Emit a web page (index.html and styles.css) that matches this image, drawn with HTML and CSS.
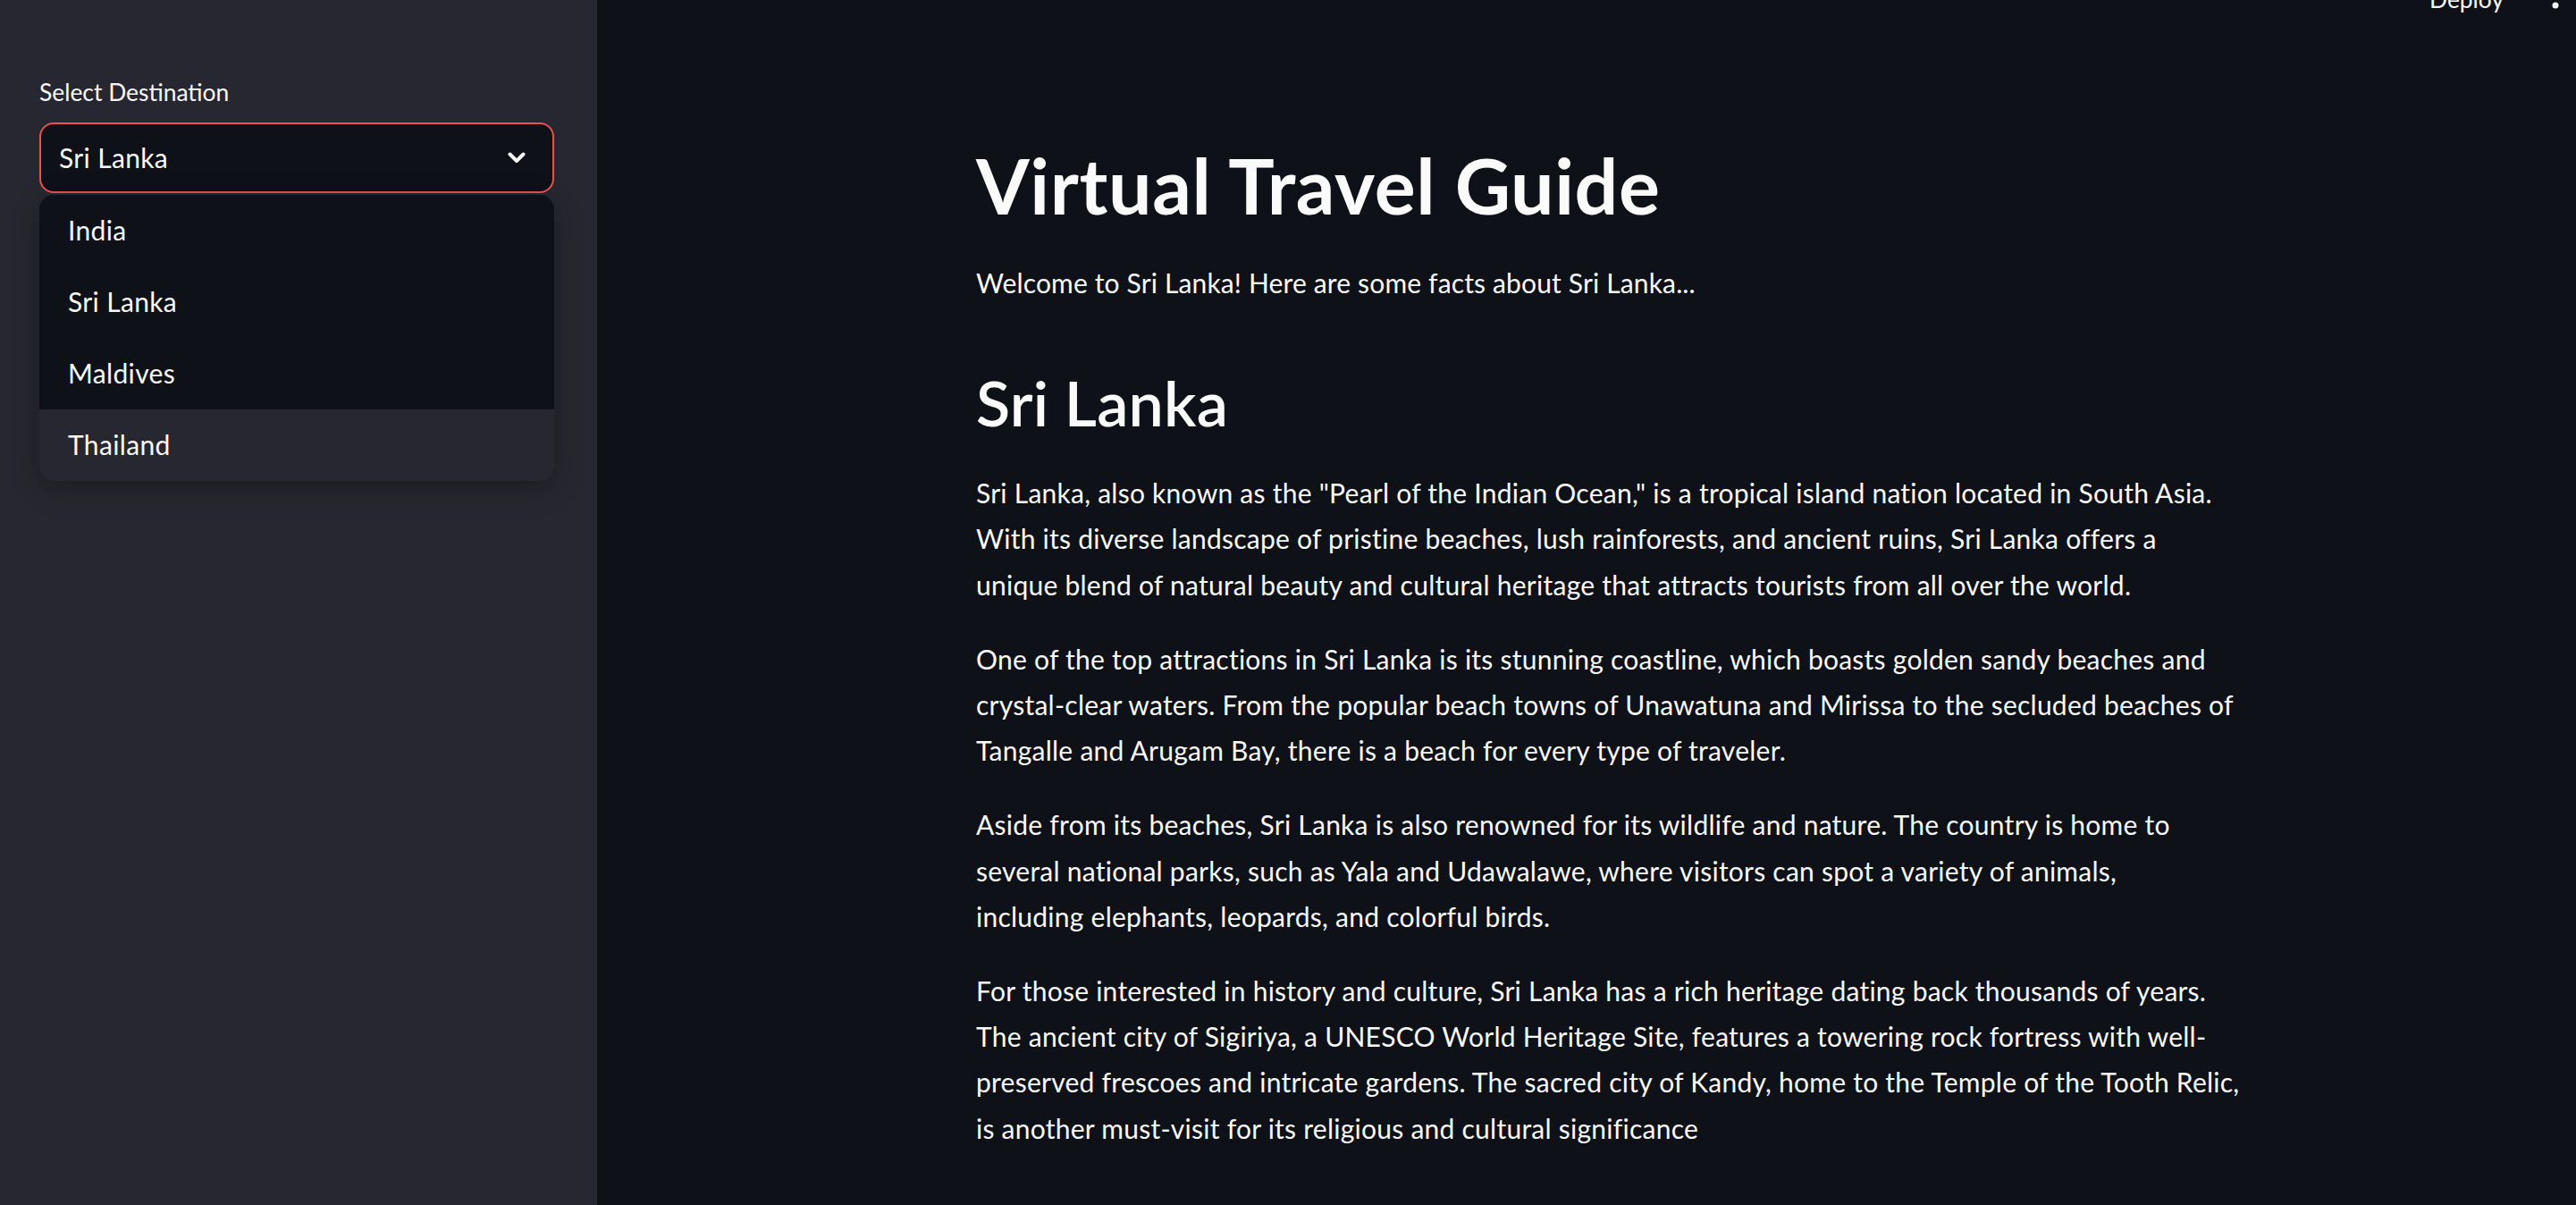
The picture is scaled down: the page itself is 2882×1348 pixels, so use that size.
FILE: index.html
```html
<!DOCTYPE html>
<html lang="en">
<head>
<meta charset="utf-8">
<title>Virtual Travel Guide</title>
<link rel="stylesheet" href="styles.css">
</head>
<body>
<div class="app">
  <aside class="sidebar">
    <div class="sidebar-content">
      <label class="widget-label">Select Destination</label>
      <div class="select">
        <div class="select-box">
          <span class="select-value">Sri Lanka</span>
          <svg class="chevron" width="20" height="13" viewBox="0 0 20 13" aria-hidden="true">
            <polyline points="2.5,2.5 10,10 17.5,2.5" fill="none" stroke="#fafafa" stroke-width="4" stroke-linecap="round" stroke-linejoin="round"/>
          </svg>
        </div>
        <ul class="menu">
          <li class="menu-item">India</li>
          <li class="menu-item">Sri Lanka</li>
          <li class="menu-item">Maldives</li>
          <li class="menu-item is-hover">Thailand</li>
        </ul>
      </div>
    </div>
  </aside>
  <main class="main">
    <header class="header">
      <span class="deploy">Deploy</span>
      <svg class="dots" width="8" height="34" viewBox="0 0 8 34" aria-hidden="true">
        <circle cx="4" cy="4" r="3.5" fill="#fafafa"/>
        <circle cx="4" cy="17" r="3.5" fill="#fafafa"/>
        <circle cx="4" cy="30" r="3.5" fill="#fafafa"/>
      </svg>
    </header>
    <div class="block">
      <h1 class="title">Virtual Travel Guide</h1>
      <p class="welcome">Welcome to Sri Lanka! Here are some facts about Sri Lanka...</p>
      <h2 class="subtitle">Sri Lanka</h2>
      <p class="para">Sri Lanka, also known as the "Pearl of the Indian Ocean," is a tropical island nation located in South Asia.<br>
      With its diverse landscape of pristine beaches, lush rainforests, and ancient ruins, Sri Lanka offers a<br>
      unique blend of natural beauty and cultural heritage that attracts tourists from all over the world.</p>
      <p class="para">One of the top attractions in Sri Lanka is its stunning coastline, which boasts golden sandy beaches and<br>
      crystal-clear waters. From the popular beach towns of Unawatuna and Mirissa to the secluded beaches of<br>
      Tangalle and Arugam Bay, there is a beach for every type of traveler.</p>
      <p class="para">Aside from its beaches, Sri Lanka is also renowned for its wildlife and nature. The country is home to<br>
      several national parks, such as Yala and Udawalawe, where visitors can spot a variety of animals,<br>
      including elephants, leopards, and colorful birds.</p>
      <p class="para">For those interested in history and culture, Sri Lanka has a rich heritage dating back thousands of years.<br>
      The ancient city of Sigiriya, a UNESCO World Heritage Site, features a towering rock fortress with well-<br>
      preserved frescoes and intricate gardens. The sacred city of Kandy, home to the Temple of the Tooth Relic,<br>
      is another must-visit for its religious and cultural significance</p>
    </div>
  </main>
</div>
</body>
</html>
```

FILE: styles.css
```css
* {
  box-sizing: border-box;
}

html, body {
  margin: 0;
  padding: 0;
}

body {
  background: #0e1117;
  color: #fafafa;
  font-family: Lato, "Noto Sans", sans-serif;
  height: 1348px;
  overflow: hidden;
}

.app {
  display: flex;
  height: 1348px;
}

/* Sidebar */
.sidebar {
  flex: none;
  width: 668px;
  background: #262730;
}

.sidebar-content {
  padding: 81px 48px 0 44px;
}

.widget-label {
  display: block;
  font-size: 26.4px;
  line-height: 45px;
  height: 45px;
  margin-bottom: 11px;
  color: #fafafa;
}

.select {
  position: relative;
  width: 576px;
}

.select-box {
  height: 79px;
  display: flex;
  align-items: center;
  justify-content: space-between;
  padding: 0 30px 2px 20px;
  border: 2px solid #ea524e;
  border-radius: 16px;
  background: #0e1117;
}

.select-value {
  font-size: 30px;
  line-height: 36px;
  letter-spacing: 0.35px;
}

.chevron {
  display: block;
  margin-top: 2px;
}

.menu {
  position: absolute;
  top: 81px;
  left: 0;
  right: 0;
  margin: 0;
  padding: 0;
  list-style: none;
  background: #0e1117;
  border-radius: 16px;
  overflow: hidden;
  box-shadow: 0 8px 32px rgba(0, 0, 0, 0.28);
}

.menu-item {
  height: 80px;
  display: flex;
  align-items: center;
  padding: 0 0 3px 32px;
  font-size: 30px;
  line-height: 36px;
  letter-spacing: 0.35px;
}

.menu-item.is-hover {
  background: #262730;
}

/* Main */
.main {
  flex: 1;
  position: relative;
}

.header {
  position: absolute;
  top: -24px;
  right: 19px;
  display: flex;
  align-items: flex-start;
  gap: 54px;
}

.deploy {
  font-size: 26.4px;
  line-height: 37px;
  margin-top: 5px;
}

.dots {
  display: block;
}

.block {
  padding: 155px 0 0 424px;
}

.title {
  width: 1440px;
  margin: 0;
  font-size: 86px;
  line-height: 103px;
  font-weight: 700;
  letter-spacing: 0.6px;
}

.welcome {
  width: 1440px;
  margin: 33px 0 0;
  font-size: 30px;
  line-height: 51.2px;
  letter-spacing: 0.15px;
}

.subtitle {
  width: 1440px;
  margin: 66px 0 0;
  font-size: 70px;
  line-height: 84px;
  font-weight: 600;
  letter-spacing: 0.2px;
}

.para {
  width: 1440px;
  margin: 32px 0 0;
  font-size: 30px;
  line-height: 51.2px;
  letter-spacing: 0.25px;
}

.subtitle + .para {
  margin-top: 34px;
}
```
